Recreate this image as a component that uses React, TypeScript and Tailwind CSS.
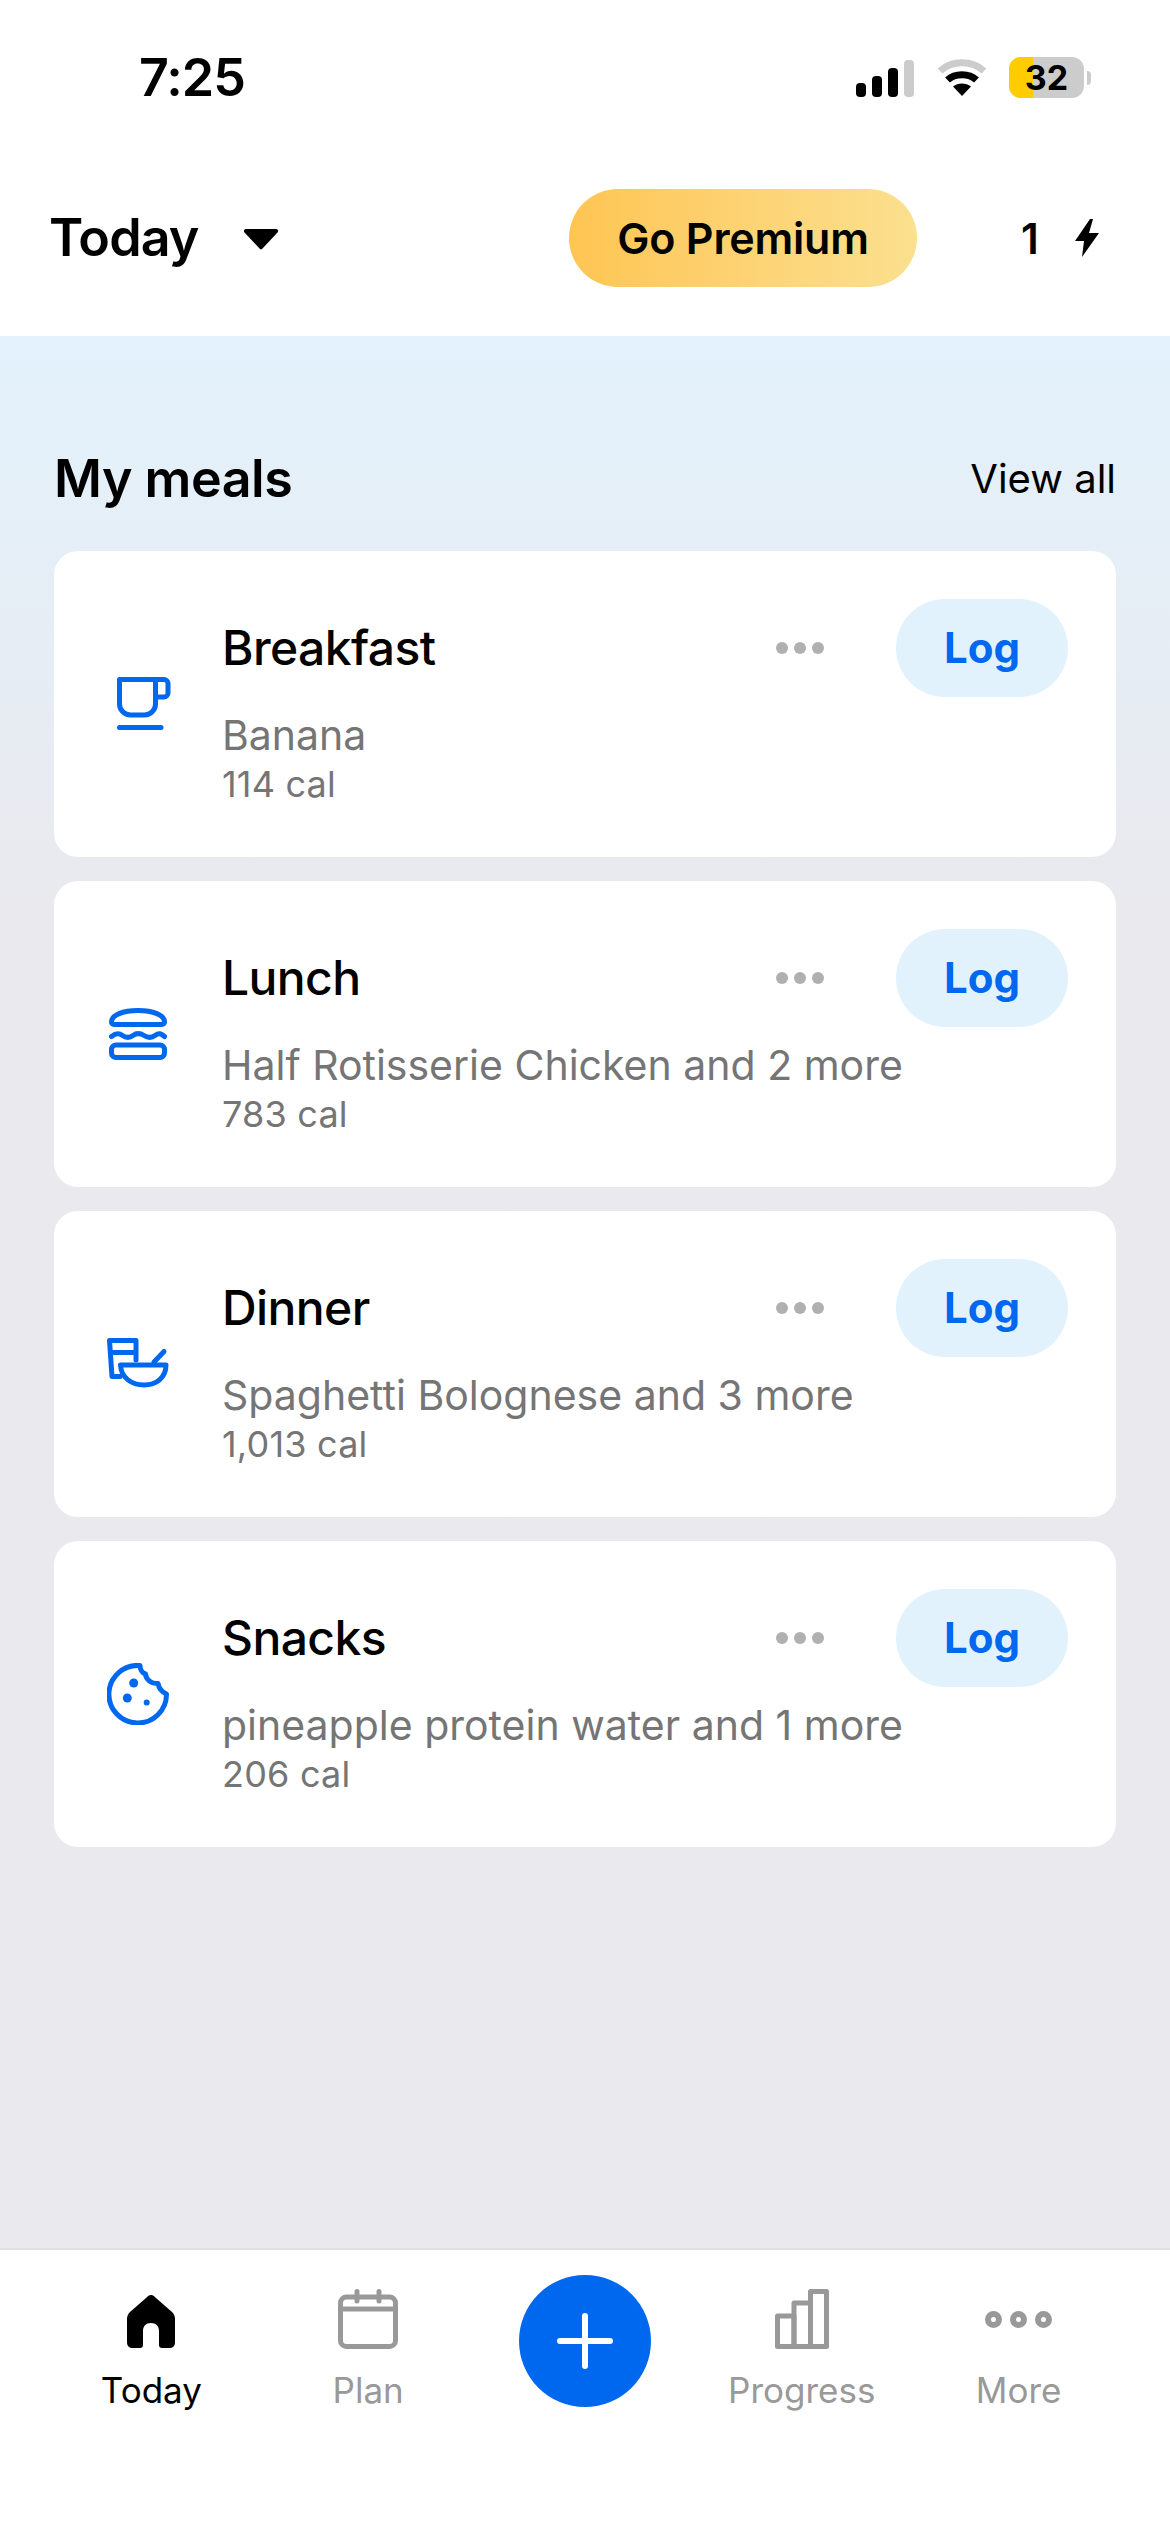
const BLUE = "#0068ee";

function Cup() {
  return (
    <svg width="54" height="54" viewBox="0 0 54 54" fill="none" stroke={BLUE} strokeWidth="5" strokeLinecap="round" strokeLinejoin="round" className="ml-[12px]">
      <path d="M2.5 2.5H38.5V27a11 11 0 0 1-11 11H13.5a11 11 0 0 1-11-11Z" />
      <path d="M38.5 2.5H47a4 4 0 0 1 4 4V16a4 4 0 0 1-4 4H38.5" />
      <path d="M2.5 50.5H44" />
    </svg>
  );
}

function Burger() {
  return (
    <svg width="58" height="52" viewBox="0 0 58 52" fill="none" stroke={BLUE} strokeWidth="5" strokeLinecap="round" strokeLinejoin="round">
      <path d="M2.5 14C2.5 7 14 2.5 29 2.5S55.5 7 55.5 14a2.5 2.5 0 0 1-2.5 2.5H5A2.5 2.5 0 0 1 2.5 14Z" />
      <path d="M2.5 28.500C7 25 10 25 13.500 27.500S20 30.500 24 27.500 31 25 35 27.500 42 30.500 46 27.500 52 25.500 55.500 28.500" />
      <rect x="2.5" y="37" width="53" height="12.5" rx="4.5" />
    </svg>
  );
}

function Dinner() {
  return (
    <svg width="62" height="52" viewBox="0 0 62 52" fill="none" stroke={BLUE} strokeWidth="5" strokeLinecap="round" strokeLinejoin="round">
      <path d="M2.500 2.500H29V22M2.500 2.500L5 38.500H13M4 14.500H29" />
      <path d="M13.500 27H59C59 40 49 47 37 47S14 40 13.500 27Z" />
      <path d="M47 24L57 13.500" />
    </svg>
  );
}

function Cookie() {
  return (
    <svg width="62" height="62" viewBox="0 0 62 62" fill="none">
      <path d="M33 2.500A28.800 28.800 0 1 0 59.500 31C55 29 52 26 51 20.500C45 21 39 17 38.500 11C35 10 33 6 33 2.500Z" stroke={BLUE} strokeWidth="5" strokeLinejoin="round" />
      <circle cx="26.700" cy="20" r="4.500" fill={BLUE} />
      <circle cx="20.300" cy="35" r="4.500" fill={BLUE} />
      <circle cx="39.700" cy="39.600" r="3" fill={BLUE} />
    </svg>
  );
}

const meals = [
  { name: "Breakfast", desc: "Banana", cal: "114 cal", icon: <Cup /> },
  { name: "Lunch", desc: "Half Rotisserie Chicken and 2 more", cal: "783 cal", icon: <Burger /> },
  { name: "Dinner", desc: "Spaghetti Bolognese and 3 more", cal: "1,013 cal", icon: <Dinner /> },
  { name: "Snacks", desc: "pineapple protein water and 1 more", cal: "206 cal", icon: <Cookie /> },
];

function MealCard({ m }: { m: (typeof meals)[number] }) {
  return (
    <div className="h-[306px] rounded-[24px] bg-white flex">
      <div className="w-[168px] shrink-0 flex items-center justify-center">
        {m.icon}
      </div>
      <div className="flex-1 pt-[48px] pr-[48px]">
        <div className="flex items-center h-[98px]">
          <div className="text-[48px] font-medium text-black flex-1 tracking-[-0.6px]">{m.name}</div>
          <div className="flex gap-[6px] mr-[72px]">
            <span className="w-[12px] h-[12px] rounded-full bg-[#b0b0b0]" />
            <span className="w-[12px] h-[12px] rounded-full bg-[#b0b0b0]" />
            <span className="w-[12px] h-[12px] rounded-full bg-[#b0b0b0]" />
          </div>
          <div className="w-[172px] h-[98px] rounded-full bg-[#e1f2fd] flex items-center justify-center pb-[2px] text-[42px] font-bold text-[#0068ee]">
            Log
          </div>
        </div>
        <div className="text-[41px] leading-[50px] mt-[13px] text-[#757575] whitespace-nowrap tracking-[0px]">{m.desc}</div>
        <div className="text-[36px] leading-[44px] mt-[2px] text-[#757575] tracking-[0.2px]">{m.cal}</div>
      </div>
    </div>
  );
}

function Tab({ label, active, children }: { label: string; active?: boolean; children: React.ReactNode }) {
  return (
    <div className="flex flex-col items-center">
      <div className="h-[60px] flex items-end justify-center">{children}</div>
      <div className={`text-[35px] leading-[44px] mt-[19px] ${active ? "text-black" : "text-[#999999]"}`}>{label}</div>
    </div>
  );
}

export default function App() {
  return (
    <div className="w-[1170px] h-[2532px] flex flex-col bg-white font-['Inter',sans-serif]">
      <header className="h-[336px] shrink-0 bg-white">
        <div className="h-[189px] flex items-start pt-[52px]">
          <div className="ml-[139px] text-[52px] leading-[52px] font-semibold text-black tracking-[-1px]">7:25</div>
          <div className="ml-auto mr-[79px] mt-[5px] flex items-center h-[41px]">
            <svg width="58" height="37" viewBox="0 0 58 37" fill="black" className="mt-[1px]">
              <rect x="0" y="23" width="10" height="14" rx="4" />
              <rect x="16" y="16" width="10" height="21" rx="4" />
              <rect x="32" y="8" width="10" height="29" rx="4" />
              <rect x="48" y="0" width="10" height="37" rx="4" fill="#cccccc" />
            </svg>
            <svg width="50" height="37" viewBox="0 0 50 37" fill="none" className="ml-[23px]">
              <path d="M3 12C15 1 35 1 47 12" stroke="#cccccc" strokeWidth="7" />
              <path d="M10.500 21C18 14 32 14 39.500 21" stroke="black" strokeWidth="7" />
              <path d="M16 27.500C21 23.500 29 23.500 34 27.500L25 37Z" fill="black" />
            </svg>
            <div className="ml-[22px] relative w-[75px] h-[41px] rounded-[12px] bg-[#cccccc] overflow-hidden flex items-center justify-center">
              <div className="absolute left-0 top-0 bottom-0 w-[24px] bg-[#ffcc00]" />
              <span className="relative text-[34px] font-bold text-black">32</span>
            </div>
            <div className="ml-[3px] w-[4px] h-[14px] rounded-r-full bg-[#cccccc]" />
          </div>
        </div>
        <div className="h-[98px] flex items-center relative">
          <div className="ml-[49px] text-[52px] font-semibold text-black tracking-[-0.9px]">Today</div>
          <svg width="36" height="22" viewBox="0 0 36 22" className="ml-[45px] mt-[1px]">
            <path d="M3 1H33a2 2 0 0 1 1.500 3.400L19.500 20.500a2 2 0 0 1-3 0L1.500 4.400A2 2 0 0 1 3 1Z" fill="black" />
          </svg>
          <div className="absolute left-[569px] w-[348px] h-[98px] rounded-full bg-linear-to-r from-[#fec552] to-[#fbe08f] flex items-center justify-center text-[43px] font-semibold text-black tracking-[-0.2px]">
            Go Premium
          </div>
          <div className="absolute left-[1021px] text-[42px] font-semibold text-black">1</div>
          <svg width="26" height="38" viewBox="0 0 26 38" className="absolute left-[1074px]">
            <path d="M16 0L1 22H10L8 38L25 14H15L19 0Z" fill="black" />
          </svg>
        </div>
      </header>

      <main className="flex-1 bg-linear-to-b from-[#e3f2fc] to-[#e9e9ee] to-[30%] px-[54px]">
        <div className="flex items-center justify-between h-[215px] pt-[70px]">
          <div className="text-[52px] font-semibold text-black tracking-[-0.5px]">My meals</div>
          <div className="text-[40px] text-black">View all</div>
        </div>
        <div className="flex flex-col gap-[24px]">
          {meals.map((m) => (
            <MealCard key={m.name} m={m} />
          ))}
        </div>
      </main>

      <nav className="h-[284px] shrink-0 bg-white border-t-[2px] border-[#e0e0e4] px-[43px] grid grid-cols-5 items-start pt-[39px]">
        <Tab label="Today" active>
          <svg width="48" height="53" viewBox="0 0 48 53" className="mb-[1px]">
            <path d="M24 0C26 0 27 1 29 3L45 17C47 19 48 21 48 24V47C48 51 46 53 42 53H35C33 53 32 52 32 50V36C32 31 29 28 24 28S16 31 16 36V50C16 52 15 53 13 53H6C2 53 0 51 0 47V24C0 21 1 19 3 17L19 3C21 1 22 0 24 0Z" fill="black" />
          </svg>
        </Tab>
        <Tab label="Plan">
          <svg width="60" height="60" viewBox="0 0 60 60" fill="none" stroke="#999999" strokeWidth="5" strokeLinecap="round" strokeLinejoin="round">
            <rect x="2.500" y="8" width="55" height="49.500" rx="6" />
            <path d="M2.500 20H57.500M19 2.500V12M41 2.500V12" />
          </svg>
        </Tab>
        <div className="flex justify-center -mt-[14px]">
          <div className="w-[132px] h-[132px] rounded-full bg-[#0068ee] flex items-center justify-center">
            <svg width="56" height="56" viewBox="0 0 56 56" stroke="white" strokeWidth="6" strokeLinecap="round">
              <path d="M28 3V53M3 28H53" />
            </svg>
          </div>
        </div>
        <Tab label="Progress">
          <svg width="54" height="60" viewBox="0 0 54 60" fill="none" stroke="#999999" strokeWidth="5" strokeLinejoin="round">
            <path d="M2.500 57.500V27H19V57.500Z" />
            <path d="M19 57.500V14H35.500V57.500Z" />
            <path d="M35.500 57.500V2.500H51.500V57.500Z" />
          </svg>
        </Tab>
        <Tab label="More">
          <svg width="67" height="17" viewBox="0 0 67 17" fill="none" stroke="#999999" strokeWidth="6" className="mb-[21px]">
            <circle cx="8.500" cy="8.500" r="5.500" />
            <circle cx="33.500" cy="8.500" r="5.500" />
            <circle cx="58.500" cy="8.500" r="5.500" />
          </svg>
        </Tab>
      </nav>
    </div>
  );
}
